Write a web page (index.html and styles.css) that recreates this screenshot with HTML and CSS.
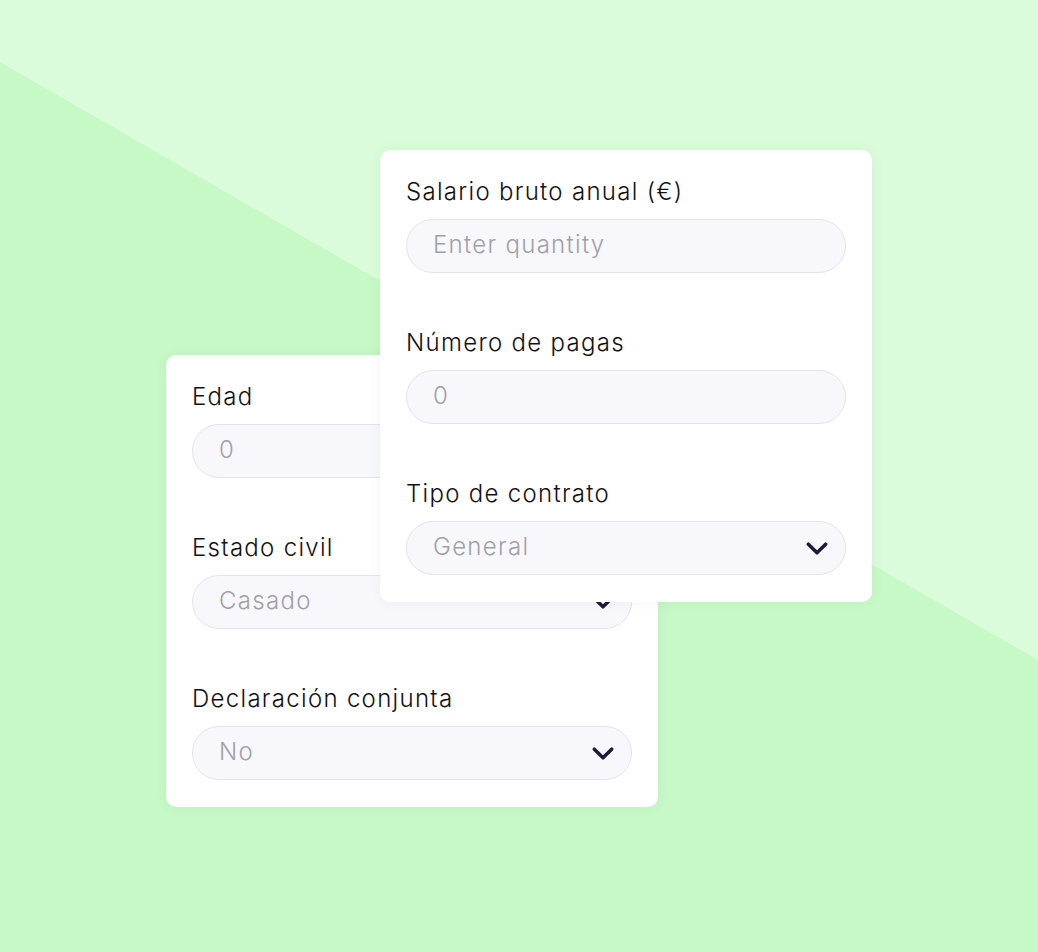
FILE: index.html
```html
<!DOCTYPE html>
<html lang="es">
<head>
<meta charset="utf-8">
<title>Calculadora de salario</title>
<link rel="stylesheet" href="styles.css">
</head>
<body>
<div class="stage">
  <div class="card card-back">
    <div class="field">
      <label class="label">Edad</label>
      <div class="input"><span class="value">0</span></div>
    </div>
    <div class="field">
      <label class="label">Estado civil</label>
      <div class="input select"><span class="value">Casado</span>
        <svg class="chev" viewBox="0 0 20 12"><path d="M2 2 L10 10 L18 2"/></svg>
      </div>
    </div>
    <div class="field">
      <label class="label">Declaración conjunta</label>
      <div class="input select"><span class="value">No</span>
        <svg class="chev" viewBox="0 0 20 12"><path d="M2 2 L10 10 L18 2"/></svg>
      </div>
    </div>
  </div>
  <div class="card card-front">
    <div class="field">
      <label class="label">Salario bruto anual (€)</label>
      <div class="input"><span class="value">Enter quantity</span></div>
    </div>
    <div class="field">
      <label class="label">Número de pagas</label>
      <div class="input"><span class="value">0</span></div>
    </div>
    <div class="field">
      <label class="label">Tipo de contrato</label>
      <div class="input select"><span class="value">General</span>
        <svg class="chev" viewBox="0 0 20 12"><path d="M2 2 L10 10 L18 2"/></svg>
      </div>
    </div>
  </div>
</div>
</body>
</html>
```
FILE: styles.css
```css
html, body {
  margin: 0;
  padding: 0;
}
body {
  width: 1038px;
  height: 952px;
  overflow: hidden;
  background: #c6f9c6;
  font-family: Inter, "Noto Sans", sans-serif;
  position: relative;
}
body::before {
  content: "";
  position: absolute;
  inset: 0;
  background: #dafcda;
  clip-path: polygon(0 0, 100% 0, 100% 660px, 0 62px);
}
.stage {
  position: relative;
  display: grid;
  width: 1038px;
  height: 952px;
}
.card {
  grid-area: 1 / 1;
  align-self: start;
  justify-self: start;
  width: 492px;
  box-sizing: border-box;
  background: #ffffff;
  border-radius: 10px;
  padding: 28px 26px 27px;
  display: flex;
  flex-direction: column;
  gap: 56px;
  box-shadow: 0 0 14px rgba(40, 80, 40, 0.06);
}
.card-back {
  margin-left: 166px;
  margin-top: 355px;
  z-index: 1;
}
.card-front {
  margin-left: 380px;
  margin-top: 150px;
  z-index: 2;
}
.field {
  display: flex;
  flex-direction: column;
  gap: 13px;
}
.label {
  font-size: 24px;
  font-weight: 300;
  line-height: 28px;
  color: #111114;
  letter-spacing: 1.3px;
}
.input {
  height: 54px;
  box-sizing: border-box;
  border: 1px solid #e3e3ea;
  border-radius: 27px;
  background: #f8f8fc;
  display: flex;
  align-items: center;
  justify-content: space-between;
  padding: 0 17px 0 26px;
}
.value {
  font-size: 24px;
  font-weight: 300;
  line-height: 28px;
  margin-top: -3px;
  color: #a0a0a8;
  letter-spacing: 1.3px;
}
.chev {
  width: 22px;
  height: 13px;
  fill: none;
  stroke: #1e1b3a;
  stroke-width: 3.2;
  stroke-linecap: round;
  stroke-linejoin: round;
}
```
